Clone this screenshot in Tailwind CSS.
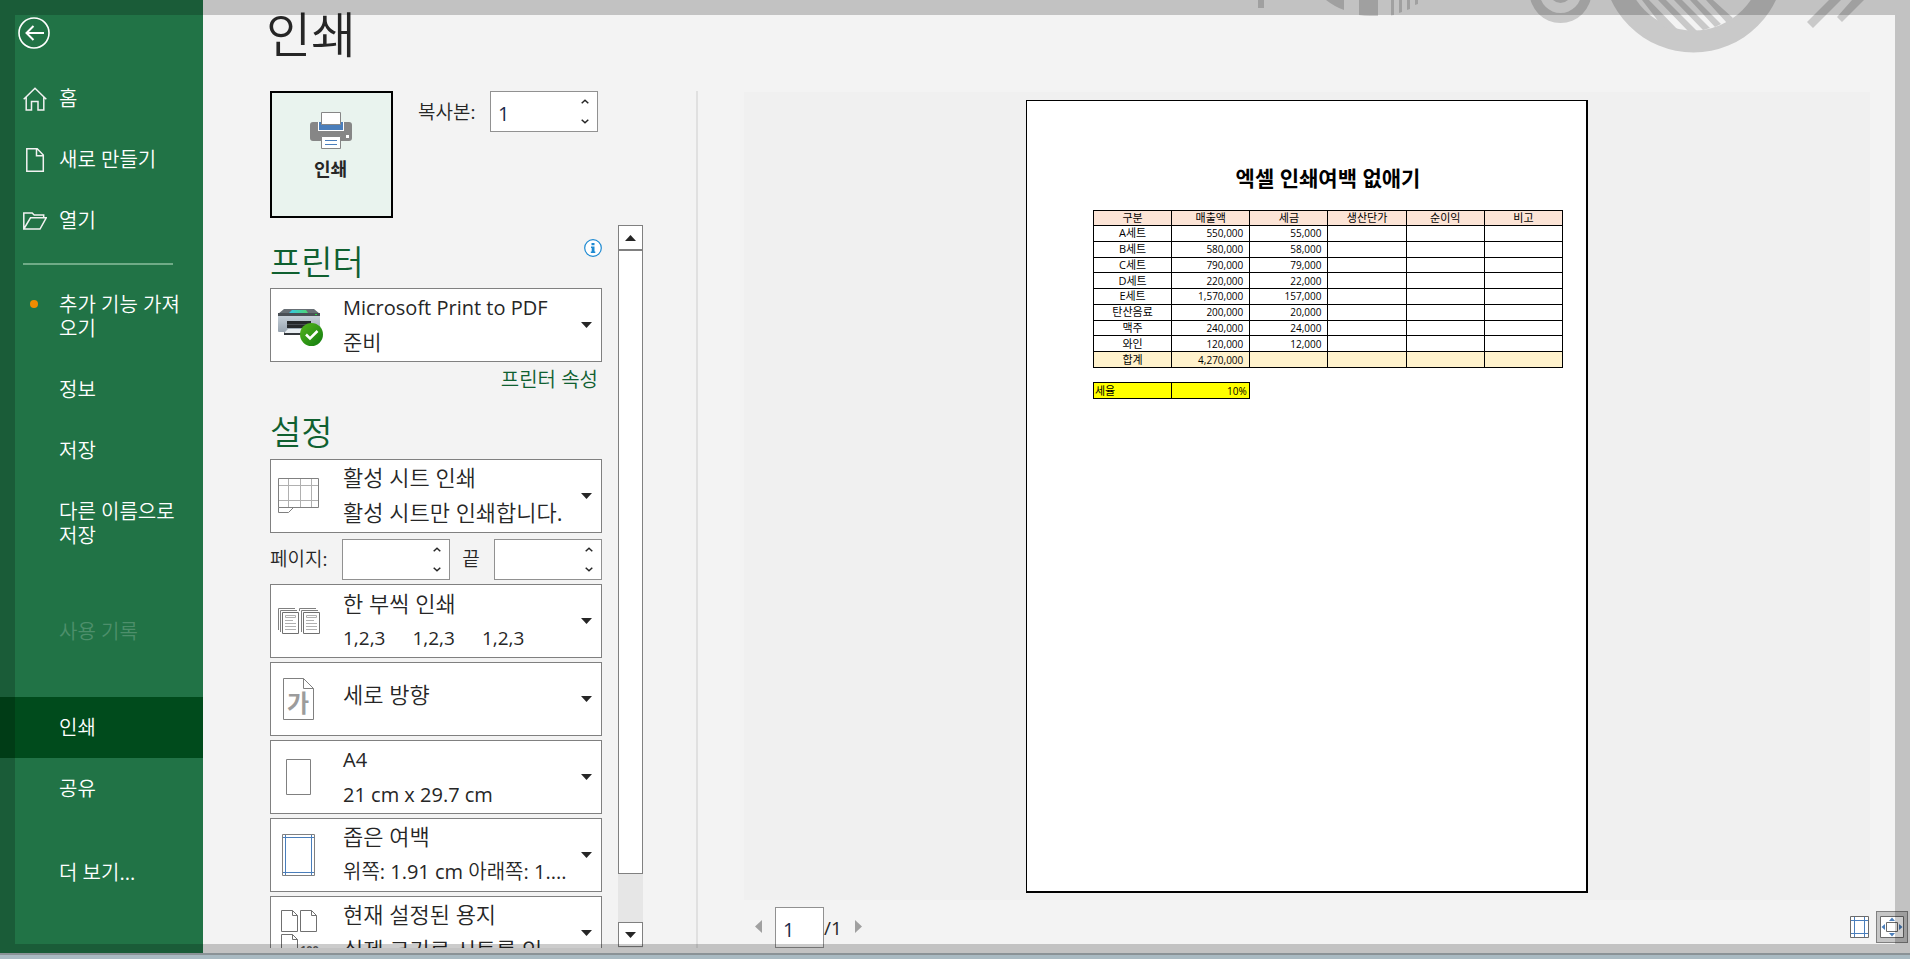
<!DOCTYPE html>
<html lang="ko">
<head>
<meta charset="utf-8">
<title>인쇄</title>
<script src="https://cdn.jsdelivr.net/npm/@tailwindcss/browser@4"></script>
</head>
<body class="relative h-screen overflow-hidden flex flex-col bg-[#f3f3f3] text-[#262626] font-['Open_Sans','Noto_Sans_CJK_KR_DemiLight','Noto_Sans_CJK_KR',sans-serif]">

<div class="flex-1 min-h-0 flex">

  <!-- Backstage navigation -->
  <nav class="w-[203px] shrink-0 bg-[#217346] text-white text-[20px] leading-6 flex flex-col">
    <button class="mt-[17px] ml-[18px] mb-[19px] w-8 h-8" aria-label="뒤로">
      <svg class="block" width="32" height="32" viewBox="0 0 32 32" fill="none" stroke="#fff" stroke-width="1.6"><circle cx="16" cy="16" r="15"/><path d="M26 16H8.500M15.500 9 8.500 16l7 7" stroke-width="2"/></svg>
    </button>
    <a href="#" class="h-[61px] shrink-0 flex items-center pl-[23px] gap-3">
      <svg width="24" height="24" viewBox="0 0 24 24" fill="none" stroke="#f2f2f2" stroke-width="1.500"><path d="M.7 12.300 12 1.300l11.300 11M3.200 10v13h5.300v-8.500h6.500V23h5.800V10"/></svg>홈</a>
    <a href="#" class="h-[61px] shrink-0 flex items-center pl-[23px] gap-3">
      <svg width="24" height="24" viewBox="0 0 24 24" fill="none" stroke="#f2f2f2" stroke-width="1.500"><path d="M3.800.8h10.400L20.300 7v16.200H3.800zM13.500.8v6.900h6.800"/></svg>새로 만들기</a>
    <a href="#" class="h-[61px] shrink-0 flex items-center pl-[23px] gap-3">
      <svg width="24" height="24" viewBox="0 0 24 24" fill="none" stroke="#f2f2f2" stroke-width="1.500"><path d="M.8 20V4h8.400l2 2h9.500v2.800M.8 20 7.500 8.800h15.700L17 20z"/></svg>열기</a>
    <div class="mt-3 ml-[23px] w-[150px] h-[2px] shrink-0 bg-[#70ab87]"></div>
    <a href="#" class="mt-[10px] h-[84px] shrink-0 flex items-center pr-4 pl-[30px] gap-[21px]">
      <span class="w-2 h-2 mb-[26px] shrink-0 rounded-full bg-[#f08c00]"></span><span class="whitespace-nowrap">추가 기능 가져<br>오기</span></a>
    <a href="#" class="h-[61px] shrink-0 flex items-center pl-[59px]">정보</a>
    <a href="#" class="h-[61px] shrink-0 flex items-center pl-[59px]">저장</a>
    <a href="#" class="h-[85px] shrink-0 flex items-center pl-[59px]">다른 이름으로<br>저장</a>
    <a href="#" aria-disabled="true" class="mt-[35px] h-[61px] shrink-0 flex items-center pl-[59px] text-[#4d8f6b]">사용 기록</a>
    <a href="#" aria-current="page" class="mt-[35px] h-[61px] shrink-0 flex items-center pl-[59px] bg-[#004b1c]">인쇄</a>
    <a href="#" class="h-[61px] shrink-0 flex items-center pl-[59px]">공유</a>
    <a href="#" class="mt-[23px] h-[61px] shrink-0 flex items-center pl-[59px]">더 보기...</a>
  </nav>

  <main class="relative flex-1 min-w-0 flex flex-col pb-[5px]">
    <!-- Title bar ornament -->
    <svg class="absolute top-0 right-0" width="660" height="56" viewBox="1250 0 660 56" aria-hidden="true">
      <g fill="#c9c9c9">
        <path d="M1258 0h6v8h-6zM1326 0h18v10q-9-3-18-10zM1359 0h19v16h-8q-6 0-11-1zM1391 0h3v15l-3 .5zM1399 0h3v12l-3 1zM1407 0h3v9l-3 1zM1415 0h3v4l-3 1z"/>
        <path fill-rule="evenodd" d="M1529.500-8a31 31 0 1 0 62 0a31 31 0 1 0-62 0zM1539.500-8a21 21 0 1 0 42 0a21 21 0 1 0-42 0z"/>
        <circle cx="1560.500" cy="-8" r="11"/>
        <path fill-rule="evenodd" d="M1602.500-38.500a91 91 0 1 0 182 0a91 91 0 1 0-182 0zM1624.500-38.500a69 69 0 1 0 138 0a69 69 0 1 0-138 0z"/>
        <path d="M1642 0h7l29 30-8-1-8-3zM1658 0h8l31 31-9 0zM1674 0h8l28 28-7 2zM1690 0h7l24 24-6 3zM1706 0h7l20 18-6 5z"/>
        <path d="M1829 0h12l-28 28-6-6zM1852 0h12l-22 22-5-5z"/>
      </g>
    </svg>

    <h1 class="h-[91px] shrink-0 pl-[63px] pt-1 text-[49px] leading-[60px]">인쇄</h1>

    <div class="flex-1 min-h-0 flex">
      <!-- Settings column -->
      <section class="w-[495px] shrink-0 pl-[67px] flex flex-col border-r-2 border-[#e0e0e0]">
        <div class="flex shrink-0">
          <button class="w-[123px] h-[127px] border-2 border-black bg-[#e9f3ee] flex flex-col items-center pr-[2px] pt-[19px] font-bold text-[18px] leading-6 font-['Noto_Sans_CJK_KR',sans-serif]">
            <svg class="mb-[6px]" width="42" height="38" viewBox="0 0 42 38"><rect y="10" width="42" height="19" rx="3" fill="#868686"/><path fill="#fff" d="M8 10h26v9H8z"/><path fill="#4a7ebb" d="M9 10h24v8H9z"/><path d="M11.500.500h19v12h-19zM11.500 24.500h19v12h-19z" fill="#fff" stroke="#868686"/><path fill="#fff" d="M36 23h3v3h-3z"/><path d="M15 28.500h12M15 32.500h12" stroke="#4a7ebb"/></svg>
            인쇄
          </button>
          <label for="copies" class="ml-[25px] w-[72px] pt-[9px] text-[19px] leading-6">복사본:</label>
          <div class="w-[108px] h-[41px] bg-white border border-[#919191] flex">
            <input id="copies" type="text" inputmode="numeric" value="1" class="min-w-0 flex-1 pl-[7px] pt-1 text-[20px] leading-6 text-[#1b2a4a] outline-none">
            <div class="w-6 shrink-0 flex flex-col">
              <button class="flex-1 flex items-center justify-center" aria-label="복사본 늘리기"><svg width="8" height="5" viewBox="0 0 8 5" fill="none" stroke="#262626" stroke-width="1.500"><path d="m.7 4.300 3.300-3 3.300 3"/></svg></button>
              <button class="flex-1 flex items-center justify-center" aria-label="복사본 줄이기"><svg width="8" height="5" viewBox="0 0 8 5" fill="none" stroke="#262626" stroke-width="1.500"><path d="m.7.7 3.300 3 3.300-3"/></svg></button>
            </div>
          </div>
        </div>

        <div class="mt-[7px] flex-1 min-h-0 flex gap-4">
          <div class="w-[332px] overflow-hidden flex flex-col">
            <div class="h-[63px] shrink-0 flex justify-between">
              <h2 class="pt-[17px] text-[34px] leading-10 text-[#0f6030]">프린터</h2>
              <button class="mt-[14px] w-[18px] h-[18px]" aria-label="프린터 정보"><svg class="block" width="18" height="18" viewBox="0 0 18 18"><circle cx="9" cy="9" r="8.300" fill="#fff" stroke="#1e8ad2" stroke-width="1.200"/><path fill="#1e8ad2" d="M7.500 4h3v2.300h-3zM7 7.500h3.500v5h.8V14H6.800v-1.500h.9V9H7z"/></svg></button>
            </div>
            <button aria-haspopup="listbox" class="h-[74px] shrink-0 bg-white border border-[#808080] flex items-center text-left leading-[35px]">
              <svg class="ml-[7px] mr-[19px] mt-[6px] shrink-0" width="46" height="40" viewBox="0 0 46 40">
                <defs><linearGradient id="pb" x2="0" y2="1"><stop stop-color="#c9d3dc"/><stop offset="1" stop-color="#98a4b0"/></linearGradient><linearGradient id="pg"><stop stop-color="#35c8e8"/><stop offset="1" stop-color="#4fd672"/></linearGradient><linearGradient id="pk" x2="1" y2="1"><stop stop-color="#55b51c"/><stop offset="1" stop-color="#107c10"/></linearGradient></defs>
                <path d="M6 1h30l6 5H0z" fill="#686f75"/><path d="M14 2h14l2 3H11z" fill="url(#pg)"/><rect y="7" width="42" height="17" rx="1" fill="url(#pb)"/><path d="M0 5h42v3H0z" fill="#4a5056"/><path d="M37 6h2v1h-2z" fill="#1fe03c"/><path d="M9 13h24v7H9z" fill="#25282b"/><path d="M9 16h24v1H9z" fill="#484d52"/><path d="M6 24h30v3H6z" fill="#33373b"/><path d="M10 21h23l-5 4H6z" fill="#e8edf1"/>
                <circle cx="33.500" cy="26.500" r="11.500" fill="url(#pk)"/><path d="m28 26.500 4 4 7.500-7.500" fill="none" stroke="#fff" stroke-width="2.500"/></svg>
              <span class="flex-1 min-w-0 flex flex-col"><span class="text-[20px]">Microsoft Print to PDF</span><span class="text-[21px]">준비</span></span>
              <svg class="mx-[9px] shrink-0" width="11" height="6" viewBox="0 0 11 6"><path d="M0 0h11L5.500 6z" fill="#262626"/></svg>
            </button>
            <div class="h-9 shrink-0 pr-1 flex justify-end items-center"><a href="#" class="text-[20px] leading-6 text-[#0f6030]">프린터 속성</a></div>
            <h2 class="h-[61px] shrink-0 pt-[14px] text-[34px] leading-10 text-[#0f6030]">설정</h2>

            <button aria-haspopup="listbox" class="h-[74px] shrink-0 bg-white border border-[#808080] flex items-center text-left text-[22px] leading-[35px]">
              <svg class="ml-[7px] mr-6 shrink-0" width="41" height="36" viewBox="0 0 41 36" fill="none"><path d="M10.500 1v28M22.500 1v28M33.500 1v28M1 7.500h39M1 22.500h39" stroke="#b0b0b0"/><path d="M.5.500h40v29H.5zM.5 29.500v5h10l5-5" stroke="#808080"/></svg>
              <span class="flex-1 min-w-0 pb-[2px] flex flex-col whitespace-nowrap"><span>활성 시트 인쇄</span><span>활성 시트만 인쇄합니다.</span></span>
              <svg class="mx-[9px] shrink-0" width="11" height="6" viewBox="0 0 11 6"><path d="M0 0h11L5.500 6z" fill="#262626"/></svg>
            </button>

            <div class="mt-[6px] mb-1 h-[41px] shrink-0 flex text-[19px] leading-6">
              <label for="from" class="w-[72px] pt-2">페이지:</label>
              <div class="w-[108px] bg-white border border-[#919191] flex">
                <input id="from" type="text" inputmode="numeric" class="min-w-0 flex-1 pl-2 outline-none">
                <div class="w-6 shrink-0 flex flex-col">
                  <button class="flex-1 flex items-center justify-center" aria-label="시작 페이지 늘리기"><svg width="8" height="5" viewBox="0 0 8 5" fill="none" stroke="#262626" stroke-width="1.500"><path d="m.7 4.300 3.300-3 3.300 3"/></svg></button>
                  <button class="flex-1 flex items-center justify-center" aria-label="시작 페이지 줄이기"><svg width="8" height="5" viewBox="0 0 8 5" fill="none" stroke="#262626" stroke-width="1.500"><path d="m.7.7 3.300 3 3.300-3"/></svg></button>
                </div>
              </div>
              <label for="to" class="flex-1 text-center pt-2 pr-[2px]">끝</label>
              <div class="w-[108px] bg-white border border-[#919191] flex">
                <input id="to" type="text" inputmode="numeric" class="min-w-0 flex-1 pl-2 outline-none">
                <div class="w-6 shrink-0 flex flex-col">
                  <button class="flex-1 flex items-center justify-center" aria-label="끝 페이지 늘리기"><svg width="8" height="5" viewBox="0 0 8 5" fill="none" stroke="#262626" stroke-width="1.500"><path d="m.7 4.300 3.300-3 3.300 3"/></svg></button>
                  <button class="flex-1 flex items-center justify-center" aria-label="끝 페이지 줄이기"><svg width="8" height="5" viewBox="0 0 8 5" fill="none" stroke="#262626" stroke-width="1.500"><path d="m.7.7 3.300 3 3.300-3"/></svg></button>
                </div>
              </div>
            </div>

            <div class="shrink-0 flex flex-col gap-1 text-[22px] leading-[35px] whitespace-nowrap">
              <button aria-haspopup="listbox" class="h-[74px] bg-white border border-[#808080] flex items-center text-left">
                <svg class="ml-[7px] mr-[23px] shrink-0" width="42" height="26" viewBox="0 0 42 26" fill="none"><path d="M.5 22V.5H17M2.500 24V2.500H19M21.500 3V.5H38M23.500 24V2.500H40" stroke="#808080"/><path d="M4.500 4.500h16v21h-16zM25.500 4.500h16v21h-16z" stroke="#707070"/><path d="M7.500 7.500h10v2h-10zM7 12.500h8M7 15.500h11M7 18.500h11M7 21.500h11M28.500 7.500h10v2h-10zM28 12.500h8M28 15.500h11M28 18.500h11M28 21.500h11" stroke="#b0b0b0"/></svg>
                <span class="flex-1 min-w-0 flex flex-col"><span>한 부씩 인쇄</span><span class="flex gap-[27px] text-[19px]"><span>1,2,3</span><span>1,2,3</span><span>1,2,3</span></span></span>
                <svg class="mx-[9px] shrink-0" width="11" height="6" viewBox="0 0 11 6"><path d="M0 0h11L5.500 6z" fill="#262626"/></svg>
              </button>
              <button aria-haspopup="listbox" class="h-[74px] bg-white border border-[#808080] flex items-center text-left">
                <svg class="ml-3 mr-[29px] shrink-0" width="31" height="42" viewBox="0 0 31 42"><path d="M.5.500h20l10 10v31H.5zM20.500.500v10h10" fill="none" stroke="#808080"/><text x="15" y="34" text-anchor="middle" font-size="24" font-weight="700" font-family="Noto Sans CJK KR" fill="#9c9c9c">가</text></svg>
                <span class="flex-1 min-w-0 pb-[10px]">세로 방향</span>
                <svg class="mx-[9px] shrink-0" width="11" height="6" viewBox="0 0 11 6"><path d="M0 0h11L5.500 6z" fill="#262626"/></svg>
              </button>
              <button aria-haspopup="listbox" class="h-[74px] bg-white border border-[#808080] flex items-center text-left">
                <svg class="ml-[15px] mr-8 shrink-0" width="25" height="36" viewBox="0 0 25 36"><path d="M.5.500h24v35H.5z" fill="none" stroke="#808080"/></svg>
                <span class="flex-1 min-w-0 flex flex-col text-[20px]"><span>A4</span><span>21 cm x 29.7 cm</span></span>
                <svg class="mx-[9px] shrink-0" width="11" height="6" viewBox="0 0 11 6"><path d="M0 0h11L5.500 6z" fill="#262626"/></svg>
              </button>
              <button aria-haspopup="listbox" class="h-[74px] bg-white border border-[#808080] flex items-center text-left">
                <svg class="ml-[11px] mr-7 shrink-0" width="33" height="42" viewBox="0 0 33 42" fill="none"><path d="M.5.500h32v41H.5z" stroke="#808080"/><path d="M3.500 1v40M29.500 1v40M1 3.500h31M1 38.500h31" stroke="#4a7ebb"/></svg>
                <span class="flex-1 min-w-0 pb-[2px] flex flex-col"><span>좁은 여백</span><span class="text-[20px]">위쪽: 1.91 cm 아래쪽: 1....</span></span>
                <svg class="mr-[9px] shrink-0" width="11" height="6" viewBox="0 0 11 6"><path d="M0 0h11L5.500 6z" fill="#262626"/></svg>
              </button>
              <button aria-haspopup="listbox" class="h-[74px] bg-white border border-[#808080] flex items-center text-left">
                <svg class="ml-[10px] mr-[23px] shrink-0" width="39" height="46" viewBox="0 0 39 46"><path d="M.5.500h11l5 5v16H.5zM11.500.500v5h5M19.500.500h11l5 5v16h-16zM30.500.500v5h5M.5 24.500h11l5 5v16H.5zM11.500 24.500v5h5" fill="none" stroke="#707070"/><text x="19" y="44" font-size="11" font-weight="700" font-family="Open Sans" fill="#606060">100</text></svg>
                <span class="flex-1 min-w-0 pb-[2px] flex flex-col"><span>현재 설정된 용지</span><span>실제 크기로 시트를 인...</span></span>
                <svg class="mx-[9px] shrink-0" width="11" height="6" viewBox="0 0 11 6"><path d="M0 0h11L5.500 6z" fill="#262626"/></svg>
              </button>
            </div>
          </div>

          <!-- Scroll bar -->
          <div class="w-[25px] flex flex-col bg-[#e6e6e6]">
            <button class="h-[25px] bg-white border border-[#808080] flex items-center justify-center" aria-label="위로"><svg width="11" height="6" viewBox="0 0 11 6"><path d="M0 6h11L5.500 0z" fill="#262626"/></svg></button>
            <div class="flex-1 bg-white border border-[#808080]"></div>
            <div class="h-12"></div>
            <button class="mb-px h-[25px] bg-white border border-[#808080] flex items-center justify-center" aria-label="아래로"><svg width="11" height="6" viewBox="0 0 11 6"><path d="M0 0h11L5.500 6z" fill="#262626"/></svg></button>
          </div>
        </div>
      </section>

      <!-- Preview column -->
      <section class="flex-1 min-w-0 flex flex-col pt-px">
        <div class="ml-[46px] mr-10 flex-1 min-h-0 bg-[#f0f0f0] pt-2 pb-[7px] flex justify-center">
          <div class="h-full aspect-[562/793] bg-white border border-r-2 border-b-2 border-black pl-[66px] pr-[23px] pt-[62px] text-black font-['Open_Sans','Noto_Sans_CJK_KR',sans-serif]">
            <h2 class="mb-[17px] text-center font-bold text-[21px] leading-[30px]">엑셀 인쇄여백 없애기</h2>
            <table class="w-full h-[158px] table-fixed border-collapse text-[10px] leading-[14px] [&_td]:border [&_td]:border-black [&_th]:border [&_th]:border-black [&_td]:p-0 [&_th]:p-0">
              <thead><tr class="bg-[#fce4d6] text-[11px] [&_th]:font-normal"><th>구분</th><th>매출액</th><th>세금</th><th>생산단가</th><th>순이익</th><th>비고</th></tr></thead>
              <tbody class="[&_td]:text-right [&_td]:pr-[6px] [&_td:first-child]:text-center [&_td:first-child]:pr-0 [&_td:first-child]:text-[11px]">
                <tr><td>A세트</td><td>550,000</td><td>55,000</td><td></td><td></td><td></td></tr>
                <tr><td>B세트</td><td>580,000</td><td>58,000</td><td></td><td></td><td></td></tr>
                <tr><td>C세트</td><td>790,000</td><td>79,000</td><td></td><td></td><td></td></tr>
                <tr><td>D세트</td><td>220,000</td><td>22,000</td><td></td><td></td><td></td></tr>
                <tr><td>E세트</td><td>1,570,000</td><td>157,000</td><td></td><td></td><td></td></tr>
                <tr><td>탄산음료</td><td>200,000</td><td>20,000</td><td></td><td></td><td></td></tr>
                <tr><td>맥주</td><td>240,000</td><td>24,000</td><td></td><td></td><td></td></tr>
                <tr><td>와인</td><td>120,000</td><td>12,000</td><td></td><td></td><td></td></tr>
                <tr class="bg-[#fff2cc]"><td>합계</td><td>4,270,000</td><td></td><td></td><td></td><td></td></tr>
              </tbody>
            </table>
            <table class="mt-[14px] w-1/3 h-[17px] table-fixed border-collapse bg-[#ffff00] text-[10px] leading-[14px]">
              <tbody><tr><th class="p-0 pl-px border border-black text-left text-[11px] font-normal">세율</th><td class="p-0 pr-[2px] border border-black text-right">10%</td></tr></tbody>
            </table>
          </div>
        </div>
        <div class="h-12 shrink-0 flex items-start pt-[7px] pl-[57px] pr-[2px]">
          <button class="mt-[13px] w-[7px] h-[13px]" aria-label="이전 페이지"><svg class="block" width="7" height="13" viewBox="0 0 7 13"><path d="M7 0v13L0 6.500z" fill="#a0a0a0"/></svg></button>
          <input aria-label="현재 페이지" type="text" value="1" class="ml-[13px] w-[49px] h-[41px] bg-white border border-[#919191] pl-[7px] pt-1 text-[20px] leading-6 text-[#1b2a4a] outline-none">
          <span class="w-[31px] pt-[9px] text-[19px] leading-6">/1</span>
          <button class="mt-[13px] w-[7px] h-[13px]" aria-label="다음 페이지"><svg class="block" width="7" height="13" viewBox="0 0 7 13"><path d="M0 0v13l7-6.500z" fill="#a0a0a0"/></svg></button>
          <button class="ml-auto mt-[9px] w-[19px] h-[22px]" aria-label="여백 표시"><svg class="block" width="19" height="22" viewBox="0 0 19 22"><path d="M.5.500h18v21H.5z" fill="#fff" stroke="#6a6a6a"/><path d="M4.500 1v20M14.500 1v20M1 4.500h17M1 17.500h17" stroke="#4a7ebb"/></svg></button>
          <button class="ml-[7px] mt-1 w-8 h-8 bg-[#c6c6c6] border border-[#808080] flex items-center justify-center" aria-label="페이지 확대/축소"><svg width="24" height="22" viewBox="0 0 24 22"><path d="M.5.500h23v21H.5z" fill="#fff" stroke="#6a6a6a"/><path d="M6.500 6.500h11v9h-11z" fill="#fff" stroke="#6a6a6a"/><path d="M12 1.500 15 5H9zM12 20.500 15 17H9zM1.500 11 5 8v6zM22.500 11 19 8v6z" fill="#4a7ebb"/></svg></button>
        </div>
      </section>
    </div>
  </main>
</div>

<div class="h-[6px] shrink-0 bg-[#a9bac2] border-t-2 border-[#8a9296]"></div>
<!-- Shaded window edge -->
<div class="absolute inset-x-0 top-0 bottom-[6px] border-[15px] border-b-[9px] border-black/20 pointer-events-none"></div>
</body>
</html>
